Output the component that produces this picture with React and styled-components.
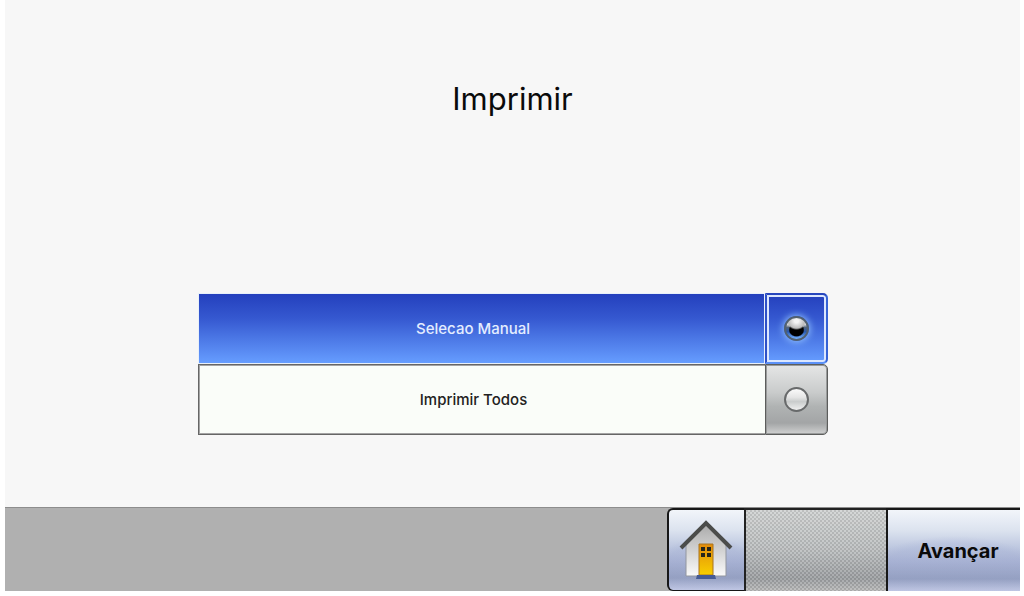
import React, { useState } from "react";
import styled, { createGlobalStyle, css } from "styled-components";

const GlobalStyle = createGlobalStyle`
  * { box-sizing: border-box; }
  body {
    margin: 0;
    background: #fff;
    color: #0a0a0a;
    font-family: Inter, "Liberation Sans", sans-serif;
  }
`;

const Screen = styled.div`
  display: flex;
  flex-direction: column;
  min-height: calc(100vh - 5px);
  margin: 0 4px 5px 5px;
  background: #f7f7f7;
`;

const Content = styled.main`
  flex: 1;
  display: flex;
  flex-direction: column;
  align-items: center;
  padding: 79px 24px 72px;
`;

const Title = styled.h1`
  margin: 0 0 auto;
  font-size: 31px;
  line-height: 40px;
  font-weight: 400;
`;

const Options = styled.fieldset`
  width: 100%;
  max-width: 630px;
  margin: 0;
  padding: 0;
  border: 0;
`;

const Option = styled.label`
  display: grid;
  grid-template-columns: 1fr 63px;
  height: 71px;
  cursor: pointer;
`;

const OptionText = styled.span`
  display: flex;
  align-items: center;
  justify-content: center;
  padding: 1px 16px 0 0;
  font-size: 15px;
  font-weight: 500;
  line-height: 20px;
  color: #222;
  border: 1px solid #666;
  border-right: 0;
  background: #fafdf9;
  box-shadow: inset 1px 1px #a4a4a4, inset 0 -1px #a4a4a4;
  ${(p) =>
    p.$selected &&
    css`
      color: #e4edff;
      border: 1px solid #e8f0fa;
      background: linear-gradient(#2440bd, #3558d0 35%, #669dff);
      box-shadow: none;
    `}
`;

const RadioCell = styled.span`
  display: flex;
  align-items: center;
  justify-content: center;
  border: 1px solid #5c5d5c;
  border-radius: 0 5px 5px 0;
  background: linear-gradient(#e5e6e6, #c9cbcb 40%, #b0b3b3 60%, #a3a5a6 84%, #d0d1d1);
  box-shadow: inset 0 0 0 1px #999b9b;
  ${(p) =>
    p.$selected &&
    css`
      border: 2px solid;
      border-color: #2746bd #3663d5 #5b91f8 #2e50c7;
      background: linear-gradient(#2440bd, #3558d0 35%, #669dff);
      box-shadow: inset 0 0 0 2px #dbe7ff;
    `}
`;

const Radio = styled.input`
  appearance: none;
  width: 25px;
  height: 25px;
  margin: 0;
  border: 2px solid #686a6b;
  border-radius: 50%;
  background: linear-gradient(#fafafa, #e5e5e5 40%, #c9cccc 60%, #f0f0f0);
  &:checked {
    border-color: #52616f;
    background:
      radial-gradient(ellipse 10px 9px at 50% 3px, #f4f4f4 0 20%, #bcbcbc 80%, transparent 100%),
      radial-gradient(ellipse 8px 7px at 50% 57%, #000 84%, transparent 100%),
      linear-gradient(#ddd 30%, #52647c 45%, #2858b0 65%, #75b2ff);
    box-shadow: 0 0 7px 1px #8fc0ff;
  }
`;

const Footer = styled.footer`
  display: grid;
  grid-template-columns: 1fr 77px 142px 134px;
  height: 84px;
  border-top: 1px solid #8d8d8d;
  background: #b0b0b0;
`;

const FooterButton = styled.button`
  display: flex;
  align-items: center;
  justify-content: center;
  margin: 0;
  padding: 0 0 0 8px;
  border: solid #171717;
  border-width: 2px 0 0 2px;
  color: #0a0a0a;
  font: 700 20px/24px Inter, "Liberation Sans", sans-serif;
  cursor: pointer;
  background:
    radial-gradient(ellipse 76% 60% at 50% 92%, #98a4cf30 85%, transparent 100%),
    linear-gradient(#f2f5fa, #dce3ef 25%, #bec8e0 46%, #a9b3d3 65%, #949fbf 85%, #c8cee8);
`;

const HomeButton = styled(FooterButton)`
  padding: 0 2px 2px 0;
  border-width: 2px 0 1px 2px;
  border-radius: 6px 0 0 6px;
`;

const EmptySlot = styled.div`
  border: solid #222;
  border-width: 2px 0 0 2px;
  background:
    repeating-conic-gradient(#ffffff24 0 25%, #55555524 0 50%) 0 0 / 4px 4px,
    linear-gradient(#cfd1d1, #b9bcbd 50%, #999c9f 85%, #b8b8b8);
`;

function HomeIcon() {
  return (
    <svg width="54" height="60" viewBox="0 0 54 60" aria-hidden="true">
      <defs>
        <linearGradient id="wall" x1="0" y1="0" x2="0" y2="1">
          <stop offset="0" stopColor="#aaa" />
          <stop offset="1" stopColor="#fafafa" />
        </linearGradient>
        <linearGradient id="door" x1="0" y1="0" x2="0" y2="1">
          <stop offset="0" stopColor="#e28b0b" />
          <stop offset="1" stopColor="#f8cf00" />
        </linearGradient>
      </defs>
      <path d="M7 26 27 5l20 21v31H7z" fill="url(#wall)" stroke="#92969f" />
      <path d="M2 29 27 4l25 25" fill="none" stroke="#4b4c4a" strokeWidth="4" />
      <path d="M20 25h14v31H20z" fill="url(#door)" stroke="#a87521" />
      <path
        d="M22 28h4v4h-4zm6 0h4v4h-4zm-6 6h4v4h-4zm6 0h4v4h-4z"
        fill="#27251b"
      />
      <path d="M18 56h18l1 4H17z" fill="#455b95" />
    </svg>
  );
}

const choices = [
  { id: "manual", label: "Selecao Manual" },
  { id: "all", label: "Imprimir Todos" },
];

export default function App() {
  const [selected, setSelected] = useState("manual");
  return (
    <>
      <GlobalStyle />
      <Screen>
        <Content>
          <Title>Imprimir</Title>
          <Options aria-label="Imprimir">
            {choices.map(({ id, label }) => (
              <Option key={id}>
                <OptionText $selected={selected === id}>{label}</OptionText>
                <RadioCell $selected={selected === id}>
                  <Radio
                    type="radio"
                    name="print"
                    checked={selected === id}
                    onChange={() => setSelected(id)}
                  />
                </RadioCell>
              </Option>
            ))}
          </Options>
        </Content>
        <Footer>
          <span />
          <HomeButton type="button" aria-label="Início">
            <HomeIcon />
          </HomeButton>
          <EmptySlot />
          <FooterButton type="button">Avançar</FooterButton>
        </Footer>
      </Screen>
    </>
  );
}
